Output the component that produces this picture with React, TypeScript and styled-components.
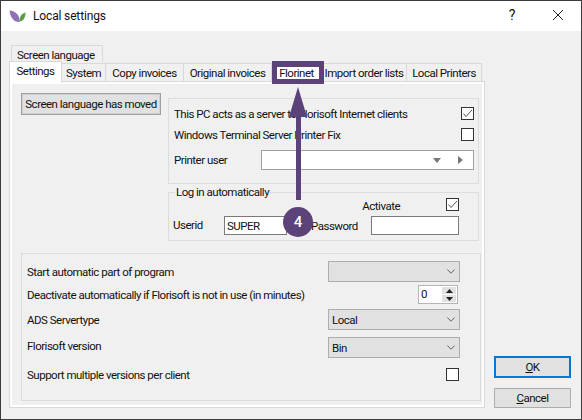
import React, { FC } from "react";
import styled, { createGlobalStyle } from "styled-components";

const purple = "#5b4279";

const GlobalStyle = createGlobalStyle`
  html, body {
    margin: 0;
    padding: 0;
    background: #f0f0f0;
  }
  * {
    box-sizing: border-box;
  }
`;

const Window = styled.div`
  position: relative;
  width: 582px;
  height: 420px;
  overflow: hidden;
  display: flex;
  flex-direction: column;
  border: 1px solid #3c3c3c;
  background: #f0f0f0;
  color: #111;
  font: 11.5px/16px Roboto, "Liberation Sans", sans-serif;
  letter-spacing: -0.5px;
  white-space: nowrap;
`;

const TitleBar = styled.header`
  height: 30px;
  flex: none;
  display: flex;
  align-items: center;
  background: #fff;
  padding-left: 8px;
`;

const TitleText = styled.span`
  margin-left: 7px;
  flex: 1;
  font-size: 12px;
  letter-spacing: -0.15px;
`;

const TitleButton = styled.span`
  width: 46px;
  display: flex;
  justify-content: center;
  padding-bottom: 2px;
  font-size: 14px;
  letter-spacing: 0;
`;

const Body = styled.div`
  flex: 1;
  display: flex;
  padding: 14px 0 11px 8px;
`;

const TabColumn = styled.div`
  width: 476px;
  display: flex;
  flex-direction: column;
`;

const UpperTab = styled.div`
  width: 92px;
  height: 17px;
  margin-left: 2px;
  border: 1px solid #d9d9d9;
  border-bottom: 0;
  padding-left: 5px;
  line-height: 19px;
`;

const TabRow = styled.div`
  display: flex;
  height: 19px;
  align-items: flex-end;
`;

const Tab = styled.div<{ $w: number; $active?: boolean; $marked?: boolean }>`
  position: relative;
  width: ${p => p.$w}px;
  height: ${p => (p.$active ? 22 : 18)}px;
  flex: none;
  text-align: center;
  border: 1px solid #d9d9d9;
  border-left-width: ${p => (p.$active ? 1 : 0)}px;
  border-bottom: 0;
  background: ${p => (p.$active || p.$marked ? "#fff" : "#f0f0f0")};
  line-height: 19px;
  z-index: ${p => (p.$active ? 1 : 0)};
  margin-bottom: ${p => (p.$active ? -2 : 0)}px;
`;

const Panel = styled.section`
  flex: 1;
  border: 1px solid #d9d9d9;
  background: #f0f0f0;
  outline: 2px solid #fff;
  outline-offset: -3px;
  padding: 11px 4px 6px 11px;
`;

const TopArea = styled.div`
  display: flex;
  gap: 7px;
  align-items: flex-start;
`;

const MovedButton = styled.button`
  width: 140px;
  height: 22px;
  padding: 0;
  background: #e1e1e1;
  border: 1px solid #a0a0a0;
  box-shadow: inset 0 0 0 1px #d0d0d0;
  font: inherit;
  letter-spacing: inherit;
  color: inherit;
`;

const RightColumn = styled.div`
  width: 311px;
  margin-top: 5px;
  display: flex;
  flex-direction: column;
  gap: 2px;
`;

const Group = styled.div<{ $mt?: number }>`
  border: 1px solid #dcdcdc;
  margin-top: ${p => p.$mt || 0}px;
`;

const PrinterGroup = styled(Group)`
  height: 86px;
  padding: 8px 4px 0 5px;
`;

const LoginGroup = styled.fieldset`
  margin: 0;
  height: 55px;
  padding: 0 19px 0 4px;
  border: 1px solid #dcdcdc;
  min-width: 0;
`;

const Legend = styled.legend`
  margin-left: 2px;
  padding: 0 1px;
  line-height: 12px;
`;

const StartGroup = styled(Group)`
  width: 460px;
  height: 148px;
  padding: 7px 20px 0 5px;
`;

const Row = styled.div<{ $h: number; $mt?: number }>`
  display: flex;
  align-items: center;
  justify-content: space-between;
  height: ${p => p.$h}px;
  margin-top: ${p => p.$mt || 0}px;
`;

const Label = styled.span<{ $raised?: boolean }>`
  padding-bottom: ${p => (p.$raised ? 4 : 0)}px;
`;

const CheckBox = styled.span<{ $mr?: number }>`
  width: 13px;
  height: 13px;
  flex: none;
  display: flex;
  background: #fff;
  border: 1px solid #333;
  margin-right: ${p => p.$mr || 0}px;
`;

const Combo = styled.div`
  width: 213px;
  height: 20px;
  display: flex;
  align-items: center;
  justify-content: flex-end;
  gap: 17px;
  padding-right: 10px;
  background: #fff;
  border: 1px solid #a0a0a0;
`;

const LoginRow = styled.div<{ $end?: boolean; $mt?: number }>`
  display: flex;
  align-items: center;
  height: ${p => (p.$end ? 13 : 19)}px;
  justify-content: ${p => (p.$end ? "flex-end" : "flex-start")};
  margin-top: ${p => p.$mt || 0}px;
`;

const ActivateLabel = styled.span`
  margin-right: 46px;
  padding-top: 2px;
`;

const FieldLabel = styled.span<{ $w: number; $ml?: number; $raised?: boolean }>`
  width: ${p => p.$w}px;
  flex: none;
  margin-left: ${p => p.$ml || 0}px;
  padding-bottom: ${p => (p.$raised ? 2 : 0)}px;
`;

const Input = styled.div<{ $w: number }>`
  width: ${p => p.$w}px;
  height: 19px;
  flex: none;
  padding-left: 2px;
  line-height: 18px;
  background: #fff;
  border: 1px solid #7a7a7a;
`;

const Select = styled.div`
  width: 132px;
  height: 21px;
  display: flex;
  align-items: center;
  justify-content: space-between;
  padding: 0 4px 0 3px;
  background: #e1e1e1;
  border: 1px solid #adadad;
`;

const Spinner = styled.div`
  width: 40px;
  height: 19px;
  margin-right: 2px;
  display: flex;
  justify-content: space-between;
  padding: 1px 1px 1px 2px;
  background: #fff;
  border: 1px solid #b5b5b5;
  line-height: 15px;
`;

const SpinnerButtons = styled.div`
  width: 14px;
  display: flex;
  flex-direction: column;
  gap: 1px;
`;

const SpinnerButton = styled.div`
  flex: 1;
  display: flex;
  align-items: center;
  justify-content: center;
  background: #e1e1e1;
`;

const ButtonColumn = styled.div`
  margin-left: 9px;
  width: 77px;
  display: flex;
  flex-direction: column;
  justify-content: flex-end;
  gap: 10px;
`;

const DialogButton = styled.button<{ $primary?: boolean }>`
  width: 77px;
  height: ${p => (p.$primary ? 22 : 20)}px;
  padding: 0;
  background: #e1e1e1;
  border: ${p => (p.$primary ? "2px solid #0078d7" : "1px solid #adadad")};
  font: inherit;
  letter-spacing: inherit;
  color: inherit;
`;

const Highlight = styled.div`
  position: absolute;
  left: 271px;
  top: 60px;
  width: 52px;
  height: 23px;
  border: 5px solid ${purple};
  border-top-width: 6px;
`;

const ArrowDrawing = styled.svg`
  position: absolute;
  left: 284px;
  top: 85px;
`;

const Badge = styled.div`
  position: absolute;
  left: 282px;
  top: 206px;
  width: 30px;
  height: 30px;
  border-radius: 50%;
  background: ${purple};
  color: #fff;
  font-size: 15px;
  font-weight: 500;
  letter-spacing: 0;
  line-height: 30px;
  text-align: center;
`;

const Check: FC = () => (
  <svg width="11" height="11" viewBox="0 0 11 11">
    <path d="M1.5 5.5 L4 8.5 L10 2" fill="none" stroke="#555" strokeWidth="1" />
  </svg>
);

const Chevron: FC = () => (
  <svg width="8" height="5" viewBox="0 0 8 5">
    <path d="M0.3 0.5 L4 4.2 L7.7 0.5" fill="none" stroke="#606060" strokeWidth="1" />
  </svg>
);

const Logo: FC = () => (
  <svg width="17" height="13" viewBox="0 0 17 13">
    <path d="M0.5 0.5 C6.5 1 10.5 4.5 10.8 12 C5.5 12.5 1.5 8.5 0.5 0.5 Z" fill="#8f70b5" />
    <path d="M16.5 2.5 C12.5 3.5 10.2 6.5 11 11.5 C14.5 10.8 16.5 7.5 16.5 2.5 Z" fill="#55a03f" />
  </svg>
);

const tabs = [
  { label: "Settings", w: 53, active: true },
  { label: "System", w: 44 },
  { label: "Copy invoices", w: 78 },
  { label: "Original invoices", w: 88 },
  { label: "Florinet", w: 50, marked: true },
  { label: "Import order lists", w: 85 },
  { label: "Local Printers", w: 75 },
];

const App: FC = () => (
  <Window>
    <GlobalStyle />
    <TitleBar>
      <Logo />
      <TitleText>Local settings</TitleText>
      <TitleButton>?</TitleButton>
      <TitleButton>
        <svg width="12" height="12" viewBox="0 0 12 12">
          <path d="M1 1 L11 11 M11 1 L1 11" stroke="#222" strokeWidth="1" />
        </svg>
      </TitleButton>
    </TitleBar>
    <Body>
      <TabColumn>
        <UpperTab>Screen language</UpperTab>
        <TabRow>
          {tabs.map(t => (
            <Tab key={t.label} $w={t.w} $active={t.active} $marked={t.marked}>
              {t.label}
            </Tab>
          ))}
        </TabRow>
        <Panel>
          <TopArea>
            <MovedButton>Screen language has moved</MovedButton>
            <RightColumn>
              <PrinterGroup>
                <Row $h={13}>
                  <Label>This PC acts as a server to Florisoft Internet clients</Label>
                  <CheckBox>
                    <Check />
                  </CheckBox>
                </Row>
                <Row $h={13} $mt={8}>
                  <Label>Windows Terminal Server Printer Fix</Label>
                  <CheckBox />
                </Row>
                <Row $h={20} $mt={9}>
                  <Label>Printer user</Label>
                  <Combo>
                    <svg width="8" height="5" viewBox="0 0 8 5">
                      <path d="M0 0 H8 L4 5 Z" fill="#777" />
                    </svg>
                    <svg width="5" height="8" viewBox="0 0 5 8">
                      <path d="M0 0 V8 L5 4 Z" fill="#777" />
                    </svg>
                  </Combo>
                </Row>
              </PrinterGroup>
              <LoginGroup>
                <Legend>Log in automatically</Legend>
                <LoginRow $end>
                  <ActivateLabel>Activate</ActivateLabel>
                  <CheckBox>
                    <Check />
                  </CheckBox>
                </LoginRow>
                <LoginRow $mt={5}>
                  <FieldLabel $w={51} $raised>
                    Userid
                  </FieldLabel>
                  <Input $w={63}>SUPER</Input>
                  <FieldLabel $w={60} $ml={24}>
                    Password
                  </FieldLabel>
                  <Input $w={88} />
                </LoginRow>
              </LoginGroup>
            </RightColumn>
          </TopArea>
          <StartGroup $mt={12}>
            <Row $h={21}>
              <Label>Start automatic part of program</Label>
              <Select>
                <span />
                <Chevron />
              </Select>
            </Row>
            <Row $h={19} $mt={3}>
              <Label>Deactivate automatically if Florisoft is not in use (in minutes)</Label>
              <Spinner>
                <span>0</span>
                <SpinnerButtons>
                  <SpinnerButton>
                    <svg width="7" height="4" viewBox="0 0 7 4">
                      <path d="M0 4 H7 L3.5 0 Z" fill="#222" />
                    </svg>
                  </SpinnerButton>
                  <SpinnerButton>
                    <svg width="7" height="4" viewBox="0 0 7 4">
                      <path d="M0 0 H7 L3.5 4 Z" fill="#222" />
                    </svg>
                  </SpinnerButton>
                </SpinnerButtons>
              </Spinner>
            </Row>
            <Row $h={21} $mt={5}>
              <Label>ADS Servertype</Label>
              <Select>
                <span>Local</span>
                <Chevron />
              </Select>
            </Row>
            <Row $h={21} $mt={7}>
              <Label $raised>Florisoft version</Label>
              <Select>
                <span>Bin</span>
                <Chevron />
              </Select>
            </Row>
            <Row $h={13} $mt={10}>
              <Label>Support multiple versions per client</Label>
              <CheckBox $mr={1} />
            </Row>
          </StartGroup>
        </Panel>
      </TabColumn>
      <ButtonColumn>
        <DialogButton $primary>
          <u>O</u>K
        </DialogButton>
        <DialogButton>
          <u>C</u>ancel
        </DialogButton>
      </ButtonColumn>
    </Body>
    <Highlight />
    <ArrowDrawing width="28" height="116" viewBox="0 0 28 116">
      <path d="M13 1 L22 31 H16 V114 H11 V31 H4 Z" fill={purple} />
    </ArrowDrawing>
    <Badge>4</Badge>
  </Window>
);

export default App;
